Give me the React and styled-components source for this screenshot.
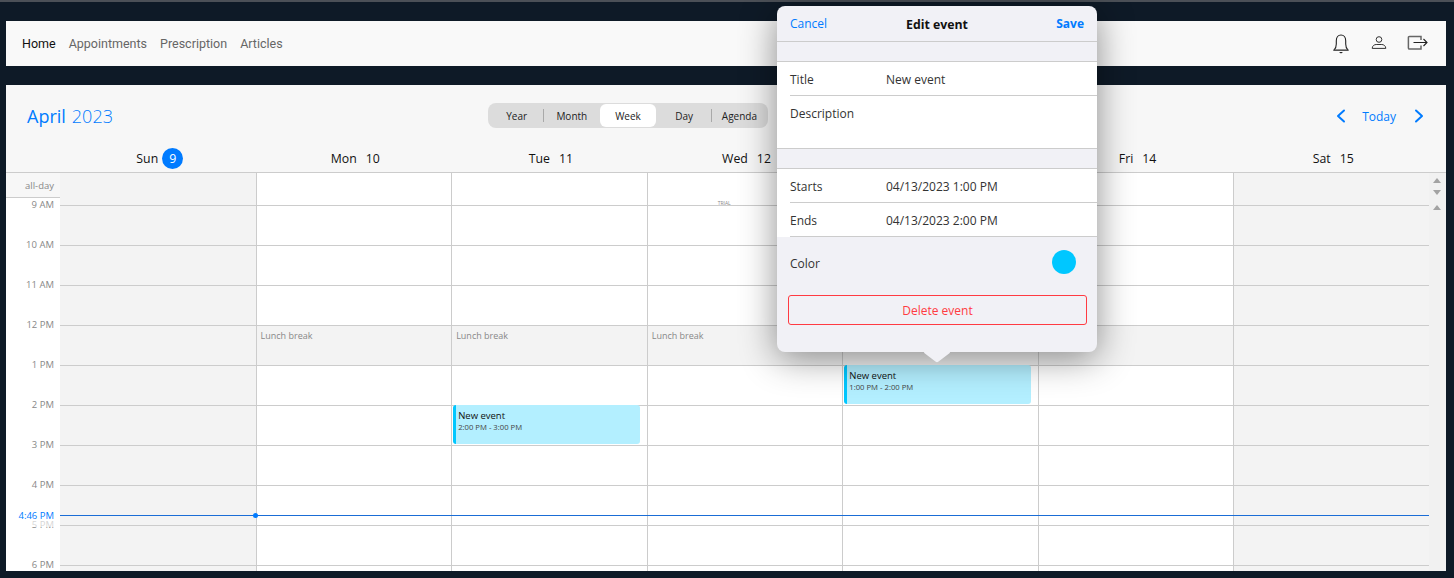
import React from "react";
import styled, { createGlobalStyle } from "styled-components";

const Global = createGlobalStyle`
  html, body { margin: 0; padding: 0; background: #0e1a27; }
  body { font-family: "Open Sans", "Noto Sans", sans-serif; overflow: hidden; }
  * { box-sizing: border-box; }
`;

const LINE = "#cccccc";
const BLUE = "#007bff";

const Page = styled.div`
  position: relative;
  width: 1454px;
  height: 578px;
  background: #0e1a27;
  overflow: hidden;
  padding: 0 8px 0 6px;
`;
const TopEdge = styled.div`
  height: 2px;
  margin: 0 -8px 19px -6px;
  background: #4b5057;
`;
const NavBar = styled.nav`
  height: 45px;
  background: #f9f9f9;
  display: flex;
  align-items: center;
  justify-content: space-between;
  padding: 0 18px 0 16px;
  margin-bottom: 19px;
`;
const NavLinks = styled.div`
  display: flex;
  gap: 13px;
`;
const NavLink = styled.a`
  font-family: "Roboto", sans-serif;
  font-size: 12.5px;
  color: ${(p) => (p.$active ? "#111" : "#666")};
`;
const NavIcons = styled.div`
  display: flex;
  align-items: center;
  gap: 20px;
  svg { display: block; }
`;

const Calendar = styled.section`
  height: 486px;
  background: #f7f7f7;
  display: flex;
  flex-direction: column;
`;
const CalHeader = styled.header`
  height: 60px;
  display: grid;
  grid-template-columns: 461px 280px 1fr;
  align-items: center;
  padding: 2px 22px 0 21px;
`;
const Title = styled.div`
  font-size: 18px;
  font-weight: 400;
  color: ${BLUE};
  span { font-weight: 300; margin-left: 6px; }
`;
const Segments = styled.div`
  height: 25px;
  margin-top: -1px;
  background: #dcdcdc;
  border-radius: 8px;
  padding: 1px;
  display: flex;
`;
const Segment = styled.div`
  flex: 1;
  position: relative;
  display: flex;
  align-items: center;
  justify-content: center;
  font-size: 10px;
  color: #222;
  border-radius: 6px;
  background: ${(p) => (p.$active ? "#fff" : "transparent")};
  margin: 0 ${(p) => (p.$active ? "1px" : "0")};
  ${(p) =>
    p.$sep &&
    `&::after { content: ""; position: absolute; right: 0; top: 5px; bottom: 5px; width: 1px; background: #a9a9a9; }`}
`;
const CalNav = styled.div`
  justify-self: end;
  display: flex;
  align-items: center;
  gap: 17px;
  color: ${BLUE};
  font-size: 12px;
  svg { display: block; }
`;
const TodayLink = styled.span`
  margin-right: 1px;
  margin-left: -1px;
`;

const DayHeads = styled.div`
  height: 28px;
  display: grid;
  grid-template-columns: 54px repeat(7, 1fr) 17px;
  border-bottom: 1px solid ${LINE};
`;
const DayHead = styled.div`
  display: flex;
  align-items: center;
  justify-content: center;
  gap: 9px;
  padding-left: 4px;
  font-size: 12.3px;
  color: #111;
`;
const TodayBadge = styled.span`
  width: 21px;
  height: 21px;
  border-radius: 50%;
  background: ${BLUE};
  color: #fff;
  display: flex;
  align-items: center;
  justify-content: center;
  margin-left: -5px;
`;

const AllDayRow = styled.div`
  height: 25px;
  display: grid;
  grid-template-columns: 54px repeat(7, 1fr) 17px;
  border-bottom: 1px solid ${LINE};
`;
const AllDayLabel = styled.div`
  font-size: 9.5px;
  color: #888;
  text-align: right;
  padding-right: 6px;
  line-height: 26px;
`;
const AllDayCell = styled.div`
  background: ${(p) => (p.$weekend ? "#f3f3f3" : "#fff")};
  border-left: ${(p) => (p.$first ? "none" : `1px solid ${LINE}`)};
`;
const ScrollPad = styled.div`
  background: #f1f1f1;
  display: flex;
  flex-direction: column;
  align-items: center;
  justify-content: center;
  gap: 7px;
`;
const ArrowUp = styled.i`
  width: 0;
  height: 0;
  border-left: 4px solid transparent;
  border-right: 4px solid transparent;
  border-bottom: 5px solid #a3a3a3;
`;
const ArrowDown = styled.i`
  width: 0;
  height: 0;
  border-left: 4px solid transparent;
  border-right: 4px solid transparent;
  border-top: 5px solid #a3a3a3;
`;

const Body = styled.div`
  position: relative;
  flex: 1;
  display: grid;
  grid-template-columns: 54px repeat(7, 1fr) 17px;
  background: #fff;
  overflow: hidden;
`;
const TimeCol = styled.div`
  background: #fff;
`;
const TimeLabel = styled.div`
  height: 40px;
  line-height: 14px;
  font-size: 9.5px;
  color: #888;
  text-align: right;
  padding-right: 6px;
`;
const DayCol = styled.div`
  position: relative;
  background: ${(p) => (p.$weekend ? "#f3f3f3" : "#fff")};
  border-left: ${(p) => (p.$first ? "none" : `1px solid ${LINE}`)};
`;
const HeadSliver = styled.div`
  height: 8px;
  border-bottom: 1px solid ${LINE};
`;
const HourCell = styled.div`
  height: 40px;
  border-bottom: 1px solid ${LINE};
  background: ${(p) => (p.$lunch ? "#f3f3f3" : "transparent")};
  padding: 3px 0 0 4px;
  font-size: 9px;
  color: #888;
`;
const Trial = styled.span`
  position: absolute;
  left: 70px;
  top: 2px;
  font-size: 5px;
  line-height: 7px;
  color: #888;
`;
const Event = styled.div`
  position: absolute;
  left: 1px;
  width: 187px;
  top: ${(p) => p.$top}px;
  height: 39px;
  background: #b3efff;
  border-left: 3px solid #00c7ff;
  border-radius: 3px;
  padding: 4px 0 0 2px;
  color: #111;
`;
const EventTitle = styled.div`
  font-size: 9.5px;
  line-height: 13px;
`;
const EventTime = styled.div`
  font-size: 7.7px;
  line-height: 11px;
  color: #444;
`;
const NowLine = styled.div`
  position: absolute;
  left: 54px;
  right: 17px;
  top: 317px;
  height: 1px;
  background: #1a6dd6;
  &::before {
    content: "";
    position: absolute;
    left: 193px;
    top: -2px;
    width: 5px;
    height: 5px;
    border-radius: 50%;
    background: ${BLUE};
  }
`;
const NowLabel = styled.div`
  position: absolute;
  left: 0;
  width: 54px;
  top: 311px;
  height: 18px;
  line-height: 14px;
  background: rgba(255, 255, 255, 0.65);
  padding-right: 6px;
  text-align: right;
  font-size: 9.5px;
  color: ${BLUE};
`;
const ScrollBar = styled.div`
  background: #f1f1f1;
  display: flex;
  flex-direction: column;
  justify-content: space-between;
  align-items: center;
  padding: 7px 0;
`;

const Popover = styled.aside`
  position: absolute;
  left: 777px;
  top: 6px;
  width: 320px;
  height: 346px;
  background: #f1f1f6;
  border-radius: 8px;
  box-shadow: 0 6px 36px rgba(0, 0, 0, 0.45);
  font-size: 12px;
  color: #333;
  &::after {
    content: "";
    position: absolute;
    left: 151px;
    bottom: -9px;
    width: 18px;
    height: 18px;
    background: #f1f1f6;
    transform: scale(1.1, 0.85) rotate(45deg);
    border-radius: 2px;
  }
`;
const PopHeader = styled.div`
  height: 36px;
  padding: 1px 13px 0;
  display: grid;
  grid-template-columns: 1fr auto 1fr;
  align-items: center;
  border-bottom: 1px solid ${LINE};
`;
const LinkBtn = styled.span`
  color: ${BLUE};
  font-size: 12px;
  font-weight: ${(p) => (p.$bold ? 700 : 400)};
  justify-self: ${(p) => (p.$bold ? "end" : "start")};
  margin-top: -1px;
`;
const PopTitle = styled.span`
  font-size: 12.3px;
  font-weight: 700;
  color: #111;
`;
const Spacer = styled.div`
  height: 19px;
`;
const FormGroup = styled.div`
  background: #fff;
  border-top: 1px solid ${LINE};
  border-bottom: ${(p) => (p.$open ? "none" : `1px solid ${LINE}`)};
  padding-left: 13px;
`;
const FormRow = styled.div`
  height: ${(p) => p.$h || 34}px;
  display: flex;
  align-items: ${(p) => (p.$top ? "flex-start" : "center")};
  padding-top: ${(p) => (p.$top ? "10px" : "2px")};
  line-height: 16px;
  border-bottom: ${(p) => (p.$line ? `1px solid ${LINE}` : "none")};
`;
const FieldLabel = styled.span`
  width: 96px;
`;
const ColorRow = styled.div`
  height: 51px;
  padding: 0 21px 0 13px;
  display: flex;
  align-items: center;
  justify-content: space-between;
  span:first-child { padding-top: 2px; }
`;
const ColorDot = styled.span`
  width: 24px;
  height: 24px;
  border-radius: 50%;
  background: #00c7ff;
  margin-top: -1px;
`;
const DeleteBtn = styled.button`
  display: block;
  position: relative;
  z-index: 1;
  width: 299px;
  height: 30px;
  margin: 7px 0 0 11px;
  background: transparent;
  border: 1px solid #ff3b42;
  border-radius: 3px;
  color: #ff3b42;
  font: 400 12px "Open Sans", sans-serif;
`;

const Bell = () => (
  <svg width="18" height="20" viewBox="0 0 18 20" fill="none" stroke="#222" strokeWidth="1.1">
    <path
      d="M1 16.200C2.800 14.500 3.300 12.500 3.300 10V6.700C3.300 3.500 5.200 1 8 1s4.700 2.500 4.700 5.700V10c0 2.500.5 4.500 2.300 6.200z"
      strokeLinejoin="round"
    />
    <path d="M6 18h4l-2 1.500z" fill="#222" stroke="none" />
    <path d="M.5 16.200h15" stroke="#555" strokeWidth="1.300" />
  </svg>
);
const User = () => (
  <svg width="16" height="16" viewBox="0 0 16 16" fill="none" stroke="#333" strokeWidth="1">
    <circle cx="8" cy="3.500" r="2.800" />
    <path d="M1.200 12.400c0-2.600 2.200-3.900 4-3.900h5.600c1.800 0 4 1.300 4 3.900z" strokeLinejoin="round" />
  </svg>
);
const Logout = () => (
  <svg width="21" height="17" viewBox="0 0 21 17" fill="none" stroke="#222" strokeWidth="1.100">
    <path
      d="M14 5V1.500H2.500C1.700 1.500 1.400 1.900 1.400 2.600v10.300c0 .7.300 1.100 1.100 1.100H14v-3.500"
      stroke="#666"
      strokeWidth="1.500"
    />
    <path d="M6.500 7.500h13.500M16.500 4l3.500 3.500-3.500 3.500" />
  </svg>
);
const Chevron = ({ dir }) => (
  <svg width="10" height="14" viewBox="0 0 10 14" fill="none" stroke={BLUE} strokeWidth="2" strokeLinecap="round" strokeLinejoin="round">
    <path d={dir === "left" ? "M8 1.500 2 7l6 5.500" : "M2 1.500 8 7l-6 5.500"} />
  </svg>
);

const days = [
  { name: "Sun", num: "9", weekend: true, today: true },
  { name: "Mon", num: "10" },
  { name: "Tue", num: "11", event: { top: 207, time: "2:00 PM - 3:00 PM" } },
  { name: "Wed", num: "12", trial: true },
  { name: "Thu", num: "13", event: { top: 167, time: "1:00 PM - 2:00 PM" } },
  { name: "Fri", num: "14" },
  { name: "Sat", num: "15", weekend: true },
];
const hours = ["9 AM", "10 AM", "11 AM", "12 PM", "1 PM", "2 PM", "3 PM", "4 PM", "5 PM", "6 PM"];

export default function App() {
  return (
    <Page>
      <Global />
      <TopEdge />
      <NavBar>
        <NavLinks>
          <NavLink $active>Home</NavLink>
          <NavLink>Appointments</NavLink>
          <NavLink>Prescription</NavLink>
          <NavLink>Articles</NavLink>
        </NavLinks>
        <NavIcons>
          <Bell />
          <User />
          <Logout />
        </NavIcons>
      </NavBar>
      <Calendar>
        <CalHeader>
          <Title>
            April<span>2023</span>
          </Title>
          <Segments>
            <Segment $sep>Year</Segment>
            <Segment>Month</Segment>
            <Segment $active>Week</Segment>
            <Segment $sep>Day</Segment>
            <Segment>Agenda</Segment>
          </Segments>
          <CalNav>
            <Chevron dir="left" />
            <TodayLink>Today</TodayLink>
            <Chevron dir="right" />
          </CalNav>
        </CalHeader>
        <DayHeads>
          <div />
          {days.map((d) => (
            <DayHead key={d.name}>
              <span>{d.name}</span>
              {d.today ? <TodayBadge>{d.num}</TodayBadge> : <span>{d.num}</span>}
            </DayHead>
          ))}
          <div />
        </DayHeads>
        <AllDayRow>
          <AllDayLabel>all-day</AllDayLabel>
          {days.map((d, i) => (
            <AllDayCell key={d.name} $weekend={d.weekend} $first={i === 0} />
          ))}
          <ScrollPad>
            <ArrowUp />
            <ArrowDown />
          </ScrollPad>
        </AllDayRow>
        <Body>
          <TimeCol>
            {hours.map((h) => (
              <TimeLabel key={h}>{h}</TimeLabel>
            ))}
          </TimeCol>
          {days.map((d, i) => (
            <DayCol key={d.name} $weekend={d.weekend} $first={i === 0}>
              <HeadSliver />
              {d.trial && <Trial>TRIAL</Trial>}
              {hours.slice(0, 9).map((h) => {
                const lunch = h === "12 PM" && !d.weekend;
                return (
                  <HourCell key={h} $lunch={lunch}>
                    {lunch ? "Lunch break" : ""}
                  </HourCell>
                );
              })}
              {d.event && (
                <Event $top={d.event.top}>
                  <EventTitle>New event</EventTitle>
                  <EventTime>{d.event.time}</EventTime>
                </Event>
              )}
            </DayCol>
          ))}
          <ScrollBar>
            <ArrowUp />
            <ArrowDown />
          </ScrollBar>
          <NowLabel>4:46 PM</NowLabel>
          <NowLine />
        </Body>
      </Calendar>
      <Popover>
        <PopHeader>
          <LinkBtn>Cancel</LinkBtn>
          <PopTitle>Edit event</PopTitle>
          <LinkBtn $bold>Save</LinkBtn>
        </PopHeader>
        <Spacer />
        <FormGroup>
          <FormRow $line>
            <FieldLabel>Title</FieldLabel>
            <span>New event</span>
          </FormRow>
          <FormRow $top $h={52}>
            <FieldLabel>Description</FieldLabel>
          </FormRow>
        </FormGroup>
        <Spacer />
        <FormGroup $open>
          <FormRow $line>
            <FieldLabel>Starts</FieldLabel>
            <span>04/13/2023 1:00 PM</span>
          </FormRow>
          <FormRow $line>
            <FieldLabel>Ends</FieldLabel>
            <span>04/13/2023 2:00 PM</span>
          </FormRow>
        </FormGroup>
        <ColorRow>
          <span>Color</span>
          <ColorDot />
        </ColorRow>
        <DeleteBtn>Delete event</DeleteBtn>
      </Popover>
    </Page>
  );
}
